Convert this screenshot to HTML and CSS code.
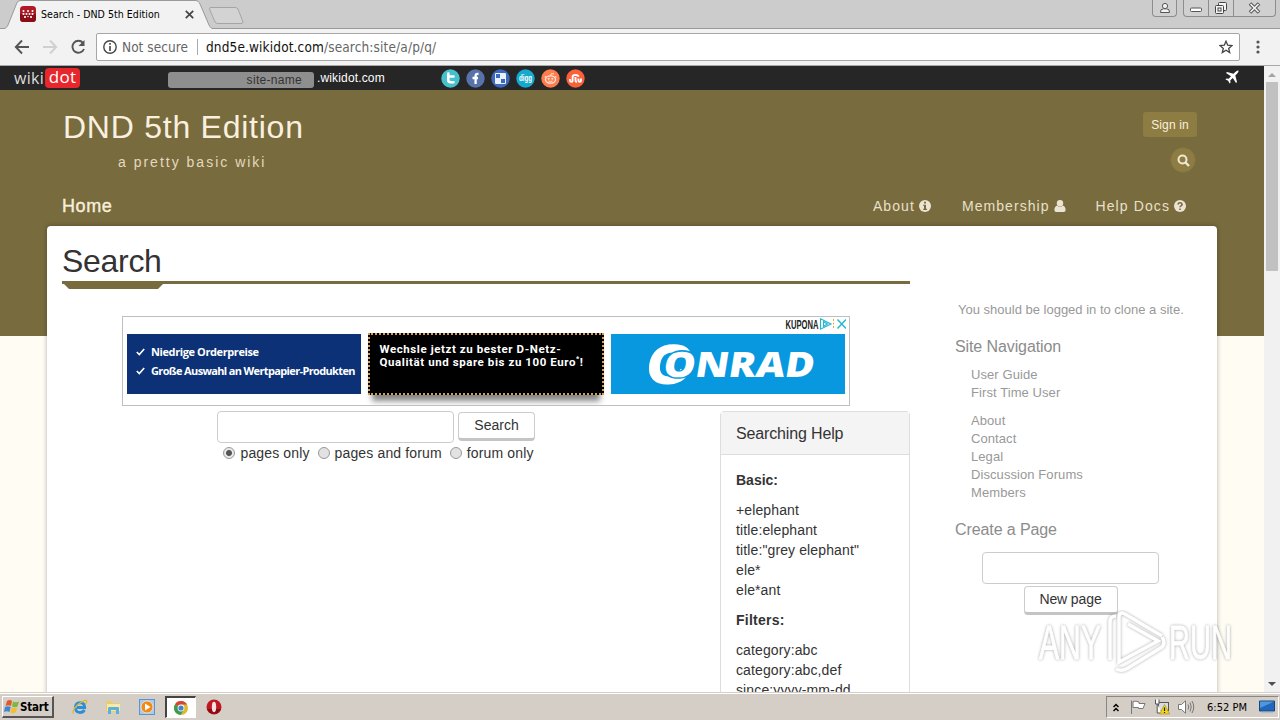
FILE: index.html
```
<!DOCTYPE html>
<html lang="en">
<head>
    <meta charset="UTF-8">
    <title>Search - DND 5th Edition</title>
    <link rel="stylesheet" href="styles.css">
</head>
<body>
<div class="tabs">
    <svg class="tab-shape" width="250" height="29" viewBox="0 0 250 29">
        <path d="M0 28.5H4C6 28.500 7 27 8 25L16 5C17 2 18 .5 21 .5H195C198 .5 199 2 200 4L209 25C210 27 211 28.500 213 28.500V30H0Z" fill="#f2f2f2"/>
        <path d="M0 28.500H4C6 28.500 7 27 8 25L16 5C17 2 18 .5 21 .5H195C198 .5 199 2 200 4L209 25C210 27 211 28.500 213 28.500H250" fill="none" stroke="#999"/>
        <path d="M211 7.500H235Q237 7.500 238 9L243 22Q243 23.500 241 23.500H218Q216 23.500 215 22L209.500 9Q209 7.500 211 7.500Z" fill="#d3d3d3" stroke="#a5a5a5"/>
    </svg>
    <div class="tab">
        <svg width="16" height="16" viewBox="0 0 16 16">
            <rect width="16" height="16" rx="3.500" fill="#b01a26"/>
            <path d="M0 8H16V12.500A3.500 3.500 0 0 1 12.500 16H3.500A3.500 3.500 0 0 1 0 12.500Z" fill="#8b0d18"/>
            <g fill="#fff"><circle cx="3.500" cy="5" r="1"/><circle cx="8" cy="5" r="1"/><circle cx="12.500" cy="5" r="1"/><circle cx="3.500" cy="8" r="1.100"/><circle cx="6.500" cy="8" r="1"/><circle cx="9.500" cy="8" r="1"/><circle cx="12.500" cy="8" r="1.100"/><circle cx="5" cy="11" r="1.100"/><circle cx="11" cy="11" r="1.100"/><circle cx="8" cy="10.500" r=".7"/></g>
        </svg>
        <span class="tab-title">Search - DND 5th Edition</span>
        <svg class="close" width="9" height="9" viewBox="0 0 9 9"><path d="M.8.8L8.200 8.200M8.200.8L.8 8.200" stroke="#444" stroke-width="1.700"/></svg>
    </div>
    <div class="window-buttons">
        <span class="user-btn"><svg width="12" height="12" viewBox="0 0 12 12" fill="#f4f4f4" stroke="#555"><path d="M1.500 10.500Q1 7 4.500 6.800H7.500Q11 7 10.500 10.500Z"/><circle cx="6" cy="4" r="2.600"/></svg></span>
        <span class="min-btn"><svg width="12" height="12" viewBox="0 0 12 12"><rect x=".5" y="6" width="11" height="3.500" rx="1" fill="#fff" stroke="#555"/></svg></span>
        <span class="max-btn"><svg width="14" height="14" viewBox="0 0 14 14" fill="#f4f4f4" stroke="#444"><rect x="4.500" y="1.500" width="8" height="8" rx="1"/><rect x="1.500" y="4.500" width="8" height="8" rx="1"/><rect x="4" y="7" width="3" height="3"/></svg></span>
        <span class="x-btn"><svg width="13" height="12" viewBox="0 0 13 12"><path d="M2 1.500L11 10.500M11 1.500L2 10.500" stroke="#555" stroke-width="3.600"/><path d="M2.500 2L10.500 10M10.500 2L2.500 10" stroke="#f4f4f4" stroke-width="1.700"/></svg></span>
    </div>
</div>

<div class="toolbar">
    <svg class="nav-icons" width="75" height="18" viewBox="0 0 75 18" fill="none" stroke-width="1.900">
        <path d="M15 9H2M8 2.500L1.800 9L8 15.500" stroke="#555"/>
        <path d="M29 9H42M36 2.500L42.200 9L36 15.500" stroke="#d0d0d0"/>
        <path d="M69 4.800A6 6 0 1 0 70 11" stroke="#555"/><path d="M70.500 2V8H64.500Z" fill="#555"/>
    </svg>
    <div class="address">
        <svg width="14" height="14" viewBox="0 0 14 14"><circle cx="7" cy="7" r="6.200" fill="none" stroke="#444" stroke-width="1.400"/><path d="M7 3V4.800M7 6V11" stroke="#444" stroke-width="1.600"/></svg>
        <span class="secure">Not secure</span>
        <span class="url"><b>dnd5e.wikidot.com</b>/search:site/a/p/q/</span>
        <svg class="star" width="14" height="14" viewBox="0 0 14 14"><path d="M7 1.200L8.700 5.200L13 5.600L9.700 8.400L10.700 12.600L7 10.300L3.300 12.600L4.300 8.400L1 5.600L5.300 5.200Z" fill="none" stroke="#444" stroke-width="1.300"/></svg>
    </div>
    <svg class="dots" width="4" height="14" viewBox="0 0 4 14" fill="#555"><circle cx="2" cy="2" r="1.600"/><circle cx="2" cy="7" r="1.600"/><circle cx="2" cy="12" r="1.600"/></svg>
</div>

<div class="viewport">
    <div class="page">
        <div class="wikibar">
            <span class="wiki">wiki</span><span class="dot">dot</span>
            <span class="site-name">site-name</span>
            <span class="domain">.wikidot.com</span>
            <div class="social">
                <svg width="19" height="19" viewBox="0 0 19 19"><circle cx="9.500" cy="9.500" r="9.200" fill="#47bfcd"/><path d="M7.300 4.500V11Q7.300 13.200 9.500 13.200H12.500M7.300 7.500H12.500" fill="none" stroke="#fff" stroke-width="2.600" stroke-linecap="round"/></svg>
                <svg width="19" height="19" viewBox="0 0 19 19"><circle cx="9.500" cy="9.500" r="9.200" fill="#5872aa"/><path d="M12.500 4.800H11.500Q9.600 4.800 9.600 7V15M6.500 9H12" fill="none" stroke="#fff" stroke-width="2.300"/></svg>
                <svg width="19" height="19" viewBox="0 0 19 19"><circle cx="9.500" cy="9.500" r="9.200" fill="#3b69bc"/><rect x="4" y="4" width="11" height="11" rx="1" fill="#e9f0fb"/><path d="M5 5H9V9H5ZM10 10H14V14H10Z" fill="#3b69bc"/></svg>
                <svg width="19" height="19" viewBox="0 0 19 19"><circle cx="9.500" cy="9.500" r="9.200" fill="#16a9cf"/><text class="digg" x="3" y="12" textLength="13" lengthAdjust="spacingAndGlyphs">digg</text></svg>
                <svg width="19" height="19" viewBox="0 0 19 19"><circle cx="9.500" cy="9.500" r="9.200" fill="#ff7d4d"/><ellipse cx="9.500" cy="10.500" rx="5" ry="3.700" fill="none" stroke="#ffe3d6" stroke-width="1.300"/><circle cx="7.700" cy="9.700" r="1" fill="#ffe3d6"/><circle cx="11.300" cy="9.700" r="1" fill="#ffe3d6"/><path d="M7.500 12Q9.500 13 11.500 12M9.500 7L10.500 4.500L13 5M4 8.500L4.500 7M15 8.500L14.500 7" fill="none" stroke="#ffe3d6"/></svg>
                <svg width="19" height="19" viewBox="0 0 19 19"><circle cx="9.500" cy="9.500" r="9.200" fill="#fb6039"/><path d="M4 10V11.500Q4 12.800 5.300 12.800T6.600 11.500V7.800Q6.600 6 9.500 6T12.400 7.800M9.500 8V11.200Q9.500 12.800 11 12.800M12.400 9.500V11.500Q12.400 12.800 13.700 12.800T15 11.500V9.500" fill="none" stroke="#fff" stroke-width="1.900"/></svg>
            </div>
            <svg class="plane" width="14" height="14" viewBox="0 0 14 14"><path d="M13.500.5Q12 0 10.300 2L8.500 3.700L2 2L1 3L6 6.200L3.700 8.700L1.500 8.500L.5 9.500L3.200 10.800L4.500 13.500L5.500 12.500L5.300 10.300L7.800 8L11 13L12 12L10.300 5.500L12 3.700Q14 2 13.500.5Z" fill="#fff"/></svg>
        </div>

        <header class="header">
            <div class="header-top">
                <div>
                    <div class="site-title">DND 5th Edition</div>
                    <div class="tagline">a pretty basic wiki</div>
                </div>
                <div class="account">
                    <a class="sign-in">Sign in</a>
                    <a class="search-btn"><svg width="13" height="13" viewBox="0 0 13 13" fill="none" stroke="#f0e8d6"><circle cx="5.500" cy="5.500" r="4" stroke-width="2"/><path d="M8.500 8.500L12 12" stroke-width="2.400"/></svg></a>
                </div>
            </div>
            <nav class="nav">
                <a class="home">Home</a>
                <a class="about">About <svg width="12" height="12" viewBox="0 0 12 12"><circle cx="6" cy="6" r="6" fill="#ece4d2"/><path d="M5 1.800H7V3.500H5ZM4.300 4.700H7V8.700H8V10H4.200V8.700H5V6H4.300Z" fill="#786b3e"/></svg></a>
                <a class="membership">Membership <svg width="12" height="12" viewBox="0 0 12 12" fill="#ece4d2"><circle cx="6" cy="3.200" r="3.200"/><path d="M3 5.500Q6 8 9 5.500Q11.600 6.500 11.600 10Q11.600 12 9.800 12H2.200Q.4 12 .4 10Q.4 6.500 3 5.500Z"/></svg></a>
                <a class="docs">Help Docs <svg width="12" height="12" viewBox="0 0 12 12"><circle cx="6" cy="6" r="6" fill="#ece4d2"/><path d="M3.900 4.500Q4.200 2.700 6 2.700T8.100 4.500Q8.100 5.300 7 5.900Q6 6.400 6 7.300M6 8.400V10" fill="none" stroke="#786b3e" stroke-width="1.600"/></svg></a>
            </nav>
        </header>

        <div class="card">
            <main class="main">
                <h1>Search</h1>
                <svg class="title-tab" width="101" height="6" viewBox="0 0 101 6"><path d="M2 0H101L96 5H7Z" fill="#786b3e"/></svg>

                <div class="ad">
                    <div class="ad-head">
                        <svg width="62" height="14" viewBox="0 0 62 14">
                            <text class="kupona" x="1.500" y="11.500" textLength="33" lengthAdjust="spacingAndGlyphs">KUPONA</text>
                            <path d="M36.500 1.800L47 7L36.500 12.200ZM39.500 4.800V9.200L43.500 7Z" fill="none" stroke="#1fb6cf" stroke-width="1.100"/>
                            <path d="M49.500 2V12" stroke="#f0a13a" stroke-dasharray="2 1.500"/>
                            <path d="M53.500 2.500L62 11.500M62 2.500L53.500 11.500" stroke="#1fb6cf" stroke-width="1.400"/>
                        </svg>
                    </div>
                    <div class="banners">
                        <div class="banner blue">
                            <p><svg width="9" height="8" viewBox="0 0 9 8"><path d="M.8 4L3.300 6.500L8.200 1" fill="none" stroke="#fff" stroke-width="1.600"/></svg><span>Niedrige Orderpreise</span></p>
                            <p><svg width="9" height="8" viewBox="0 0 9 8"><path d="M.8 4L3.300 6.500L8.200 1" fill="none" stroke="#fff" stroke-width="1.600"/></svg><span class="long">Große Auswahl an Wertpapier-Produkten</span></p>
                        </div>
                        <div class="banner black">Wechsle jetzt zu bester D-Netz-<br>Qualität und spare bis zu 100 Euro<sup>*</sup>!</div>
                        <div class="banner conrad">
                            <svg width="234" height="60" viewBox="0 0 234 60">
                                <text class="conrad-c" transform="translate(34 49) skewX(-9)" textLength="43" lengthAdjust="spacingAndGlyphs">C</text>
                                <text class="conrad-rest" transform="translate(51 43) skewX(-9)" textLength="151" lengthAdjust="spacingAndGlyphs">ONRAD</text>
                            </svg>
                        </div>
                    </div>
                </div>

                <div class="content">
                    <form class="search-form">
                        <div class="search-row">
                            <input type="text" class="field">
                            <button type="button" class="btn">Search</button>
                        </div>
                        <div class="options">
                            <label><i class="radio on"></i>pages only</label>
                            <label><i class="radio"></i>pages and forum</label>
                            <label><i class="radio"></i>forum only</label>
                        </div>
                    </form>
                    <div class="panel">
                        <div class="panel-heading">Searching Help</div>
                        <div class="panel-body">
                            <p><strong>Basic:</strong></p>
                            <p>+elephant<br>title:elephant<br>title:"grey elephant"<br>ele*<br>ele*ant</p>
                            <p><strong class="filters">Filters:</strong></p>
                            <p>category:abc<br>category:abc,def<br>since:yyyy-mm-dd</p>
                        </div>
                    </div>
                </div>
            </main>

            <aside class="side">
                <p class="clone">You should be logged in to clone a site.</p>
                <h2>Site Navigation</h2>
                <ul>
                    <li>User Guide</li>
                    <li>First Time User</li>
                </ul>
                <ul>
                    <li>About</li>
                    <li>Contact</li>
                    <li>Legal</li>
                    <li>Discussion Forums</li>
                    <li>Members</li>
                </ul>
                <h2 class="create">Create a Page</h2>
                <div class="new-page">
                    <input type="text" class="field">
                    <button type="button" class="btn">New page</button>
                </div>
            </aside>
        </div>
    </div>
    <div class="scrollbar">
        <i class="up"></i>
        <i class="thumb"></i>
        <i class="down"></i>
    </div>
    <svg class="watermark" width="204" height="72" viewBox="0 0 204 72">
        <g class="mark">
            <text x="5" y="49" textLength="62" lengthAdjust="spacingAndGlyphs">ANY</text>
            <text x="135" y="49" textLength="63" lengthAdjust="spacingAndGlyphs">RUN</text>
            <path d="M76 50V12Q76 6 82 6M85 44V8Q85 1 91 4L128 26M85 44V52L124 31L94 14M82 59Q88 62 94 58L128 37Q132 33 128 27"/>
        </g>
    </svg>
</div>

<div class="taskbar">
    <div class="start">
        <svg width="16" height="15" viewBox="0 0 16 15"><path d="M3 2Q6 0 8 2L7 7Q4 5.500 1.500 7Z" fill="#e2582c"/><path d="M9 2.500Q12 4 15 2.500L13.500 7.500Q11 9 8 7.500Z" fill="#7db83a"/><path d="M1 8Q4 6.500 6.700 8L5.500 13Q3 11.500 0 13Z" fill="#3f86d2"/><path d="M7.700 8.500Q10.500 10 13.200 8.500L12 13Q9.500 15 6.500 13.500Z" fill="#f3bd2c"/></svg>
        <span>Start</span>
    </div>
    <div class="launch">
        <span><svg width="16" height="16" viewBox="0 0 16 16"><path d="M12.500 11Q11 13.500 8 13.500Q3.500 13.300 3.300 8.500Q3.500 4 8 3.600Q12.700 4 12.700 8.500H5" fill="none" stroke="#2c8fd6" stroke-width="2.800"/><path d="M1.500 14.500Q-.5 12 5.500 6Q12 .5 14.500 1.500Q15.500 2.500 13.500 5" fill="none" stroke="#e0b832" stroke-width="1.300"/></svg></span>
        <span><svg width="16" height="16" viewBox="0 0 16 16"><path d="M1 2H6L7 4H14V13H1Z" fill="#e8cd6a"/><path d="M2 5H15V12H2Z" fill="#f8e9a4"/><path d="M3 9Q3 8 4 8H13Q14 8 14 9V15H11V11H6V15H3Z" fill="#5cb0e0"/></svg></span>
        <span><svg width="16" height="16" viewBox="0 0 16 16"><rect x=".5" y=".5" width="15" height="15" fill="#a7cbed" stroke="#5b95cf"/><circle cx="8" cy="8" r="6" fill="#f58714" stroke="#fff" stroke-width=".6"/><path d="M6 4.500L11.500 8L6 11.500Z" fill="#fff"/></svg></span>
        <span class="active"><svg width="14" height="14" viewBox="0 0 14 14"><circle cx="7" cy="7" r="7" fill="#ddb92d"/><path d="M7 7L1 3.400A7 7 0 0 1 13.100 3.500H7Z" fill="#d64436"/><path d="M1 3.400A7 7 0 0 0 6.500 14L10 8.700L7 7Z" fill="#3a9b51"/><circle cx="7" cy="7" r="3.400" fill="#fff"/><circle cx="7" cy="7" r="2.600" fill="#4780d0"/></svg></span>
        <span><svg width="16" height="16" viewBox="0 0 16 16"><circle cx="8" cy="8" r="7.500" fill="#c01822"/><path d="M1 10A7.500 7.500 0 0 0 15 10Z" fill="#8c0b12"/><ellipse cx="8" cy="8" rx="2.200" ry="5.200" fill="#f6e2e2"/></svg></span>
    </div>
    <div class="tray">
        <svg width="6" height="9" viewBox="0 0 6 9" fill="none" stroke="#000" stroke-width="1.500"><path d="M.5 4L3 1.500L5.500 4M.5 8L3 5.500L5.500 8"/></svg>
        <svg class="flag" width="16" height="16" viewBox="0 0 16 16" fill="#fff" stroke="#777"><path d="M1.500 1.500V15M3 2.500Q6 1.500 9 3V4.500H15L13 9.500H8.500V8.500H3Z"/></svg>
        <svg class="net" width="16" height="16" viewBox="0 0 16 16"><rect x="4.500" y="3.500" width="10" height="8" fill="#d5dce3" stroke="#555"/><path d="M1.500.5V5H5V.5M3.200 5V14H8" fill="#fff" stroke="#555"/><path d="M10.500 5.500L15.700 15H5.500Z" fill="#f5d21c" stroke="#a48a14" stroke-width=".6"/><path d="M10.500 8.500V12M10.500 13V14" stroke="#222" stroke-width="1.200"/></svg>
        <svg class="speaker" width="17" height="14" viewBox="0 0 17 14" fill="none" stroke="#777"><path d="M.5 4.500H3.500L7.500.8V13.200L3.500 9.500H.5Z" fill="#fff"/><path d="M10 4.500Q11.500 7 10 9.500M12 2.500Q14.500 7 12 11.500M14 1Q17.500 7 14 13"/></svg>
        <span class="clock">6:52 PM</span>
        <svg width="16" height="14" viewBox="0 0 16 14"><path d="M.5 1H15.500V11H.5Z" fill="#2168bd" stroke="#174580"/><path d="M1 1.500H15L1 8Z" fill="#4f98de"/><path d="M2 12.500H14" stroke="#b6bcc4" stroke-width="1.500"/></svg>
    </div>
</div>
</body>
</html>
```
FILE: styles.css
```
*{
    margin:0;
    padding:0;
    box-sizing:border-box;
}
body{
    width:1280px;
    height:720px;
    display:flex;
    flex-direction:column;
    overflow:hidden;
    font-family:"Liberation Sans", Arial, sans-serif;
    font-size:14px;
    color:#333;
}
svg{
    display:block;
    flex:none;
}

/* browser window */
.tabs{
    height:29px;
    background:#ccc;
    border-bottom:1px solid #999;
    display:flex;
    justify-content:space-between;
    position:relative;
}
.tab-shape{
    position:absolute;
    left:0;
    top:0;
}
.tab{
    display:flex;
    align-items:center;
    width:194px;
    padding-left:20px;
    position:relative;
    font-family:"DejaVu Sans Condensed", "DejaVu Sans", sans-serif;
    color:#000;
}
.tab-title{
    margin:-1px 0 0 5px;
    white-space:nowrap;
    font-size:10.5px;
    letter-spacing:.04px;
}
.close{
    margin:1px 0 0 auto;
}
.window-buttons{
    display:flex;
    height:17px;
    margin-right:4px;
}
.window-buttons span{
    display:flex;
    align-items:center;
    justify-content:center;
    border:1px solid #8d8d8d;
    border-top:0;
    background:#d0d0d0;
}
.window-buttons .user-btn{
    width:25px;
    margin-right:6px;
    border-radius:0 0 4px 4px;
}
.window-buttons .min-btn{
    width:26px;
    border-radius:0 0 0 4px;
}
.window-buttons .max-btn{
    width:25px;
    border-left:0;
}
.window-buttons .x-btn{
    width:42px;
    border-left:0;
    border-radius:0 0 4px 0;
}
.toolbar{
    height:37px;
    background:#f2f2f2;
    border-bottom:1px solid #a9a9a9;
    display:flex;
    align-items:center;
    padding:0 20px 0 14px;
}
.address{
    flex:1;
    height:28px;
    margin-left:7px;
    padding:0 6px 0 6px;
    border:1px solid #a6a6a6;
    border-radius:2px;
    background:#fff;
    display:flex;
    align-items:center;
    font:13.5px "DejaVu Sans Condensed", "DejaVu Sans", sans-serif;
    white-space:nowrap;
}
.secure{
    color:#666;
    margin-left:5px;
    padding-right:9px;
    border-right:1px solid #aaa;
    letter-spacing:.05px;
}
.url{
    margin-left:8px;
    color:#666;
    letter-spacing:.14px;
}
.url b{
    font-weight:normal;
    color:#111;
}
.star{
    margin-left:auto;
}
.dots{
    margin-left:16px;
}

/* page */
.viewport{
    height:626px;
    display:flex;
    position:relative;
    overflow:hidden;
}
.page{
    width:1264px;
    background:linear-gradient(#786b3e 270px, #fffcf3 270px);
}
.wikibar{
    height:24px;
    background:#262626;
    display:flex;
    align-items:center;
    padding:0 25px 0 14px;
    color:#fff;
}
.wiki, .dot{
    font:16px/20px "Open Sans", sans-serif;
    letter-spacing:.3px;
}
.wiki{
    width:31px;
    color:#ddd;
}
.dot{
    width:35px;
    height:20px;
    line-height:18px;
    text-align:center;
    background:#e8272d;
    border-radius:4px;
    font-size:17px;
}
.site-name{
    width:146px;
    height:16px;
    margin:4px 0 0 88px;
    padding-right:12px;
    border-radius:3px;
    background:#8e8e8e;
    color:#333;
    text-align:right;
    font-size:12px;
    line-height:16px;
    letter-spacing:.3px;
}
.domain{
    width:125px;
    padding-left:3px;
    font-size:12px;
    letter-spacing:.15px;
}
.social{
    display:flex;
    gap:6px;
    margin-left:2px;
}
.digg{
    font:bold 8.5px "Liberation Sans", sans-serif;
    fill:#fff;
}
.plane{
    margin:-3px 0 0 auto;
}
.header{
    height:136px;
    margin:0 47px;
    padding:0 15px;
    color:#f3ead6;
}
.header-top{
    height:97px;
    display:flex;
    justify-content:space-between;
}
.site-title{
    padding:18px 0 0 1px;
    font-size:32px;
    line-height:38px;
    letter-spacing:.75px;
    color:#faf0df;
}
.tagline{
    margin-left:56px;
    line-height:32px;
    letter-spacing:2px;
    color:#e3d9bd;
}
.account{
    width:54px;
    margin-right:5px;
    padding-top:22px;
    display:flex;
    flex-direction:column;
    align-items:flex-end;
    gap:10px;
}
.sign-in{
    width:54px;
    height:25px;
    border-radius:3px;
    background:#8d7d42;
    color:#faf0df;
    font-size:12px;
    line-height:26px;
    text-align:center;
    letter-spacing:.15px;
}
.search-btn{
    width:26px;
    height:26px;
    margin-right:1px;
    border:1px solid #7f713f;
    border-radius:50%;
    background:#8d7d42;
    display:flex;
    align-items:center;
    justify-content:center;
}
.nav{
    display:flex;
    line-height:38px;
    letter-spacing:1.1px;
    color:#e9e0c8;
}
.nav a{
    display:flex;
    align-items:center;
    gap:4px;
}
.nav .home{
    font-size:18px;
    letter-spacing:.6px;
    color:#f7eedb;
    -webkit-text-stroke:.4px #f7eedb;
    margin-right:auto;
}
.about{
    margin-right:31px;
}
.membership{
    margin-right:30px;
    letter-spacing:1.05px;
}
.docs{
    margin-right:16px;
}
.card{
    height:500px;
    margin:0 47px;
    padding:0 15px;
    background:#fff;
    border-radius:4px 4px 0 0;
    box-shadow:0 0 5px rgba(0,0,0,.3);
    display:flex;
}
.main{
    width:848px;
}
h1{
    height:58px;
    border-bottom:3px solid #786b3e;
    font-size:32px;
    font-weight:normal;
    line-height:70px;
    letter-spacing:-.3px;
}

/* ad block */
.ad{
    width:728px;
    height:90px;
    margin:26px 60px 5px;
    border:1px solid #bfbfbf;
    padding:0 4px;
    overflow:hidden;
}
.ad-head{
    height:16px;
    margin-right:-1px;
    display:flex;
    justify-content:flex-end;
}
.kupona{
    font:bold 12.5px "Liberation Sans", sans-serif;
    fill:#222;
}
.banners{
    display:flex;
    gap:7px;
}
.banner{
    width:234px;
    height:60px;
    margin-top:1px;
    color:#fff;
    white-space:nowrap;
}
.blue{
    background:#0c3176;
    padding:8px 0 0 9px;
    font:bold 11px/19px "Open Sans", sans-serif;
    letter-spacing:-.4px;
}
.blue p{
    display:flex;
    align-items:center;
    gap:6px;
}
.long{
    letter-spacing:-.64px;
}
.black{
    width:237px;
    height:62px;
    margin-top:0;
    padding:8px 0 0 10px;
    background:#000;
    border:2px dotted #d2a04d;
    box-shadow:0 10px 6px -4px #858585;
    font:bold 11.5px/13px Roboto, sans-serif;
    letter-spacing:.58px;
}
.black sup{
    font-size:7px;
    line-height:0;
}
.conrad{
    background:#0798df;
}
.conrad-c{
    font:bold 54px "Liberation Sans", sans-serif;
    fill:#fff;
    stroke:#fff;
    stroke-width:2px;
}
.conrad-rest{
    font:800 35px "Open Sans", sans-serif;
    fill:#fff;
    stroke:#0798df;
    stroke-width:3px;
    paint-order:stroke;
}

/* search form */
.content{
    display:flex;
    justify-content:space-between;
}
.search-form{
    width:628px;
}
.search-row{
    display:flex;
    justify-content:center;
    gap:4px;
}
.field{
    width:237px;
    height:32px;
    border:1px solid #ccc;
    border-radius:4px;
    background:#fff;
}
.btn{
    height:29px;
    width:77px;
    margin-top:1px;
    padding-bottom:1px;
    border:1px solid #ccc;
    border-bottom:3px solid #c4c4c4;
    border-radius:4px;
    background:#fff;
    color:#333;
    font:14px "Liberation Sans", sans-serif;
}
.options{
    display:flex;
    justify-content:center;
    gap:8px;
    padding-left:5px;
    line-height:21px;
    letter-spacing:.14px;
}
.options label{
    display:flex;
    align-items:center;
}
.radio{
    width:12px;
    height:12px;
    margin:-2px 5px 0 0;
    border:1px solid #999;
    border-radius:50%;
    background:#e2e2e2;
}
.radio.on{
    background:radial-gradient(#555 2.5px, #e8e8e8 3.5px);
}
.panel{
    width:190px;
    height:300px;
    border:1px solid #ddd;
    border-radius:4px;
    background:#fff;
}
.panel-heading{
    height:43px;
    padding-left:15px;
    background:#f4f4f4;
    border-bottom:1px solid #ddd;
    font-size:16px;
    line-height:44px;
    letter-spacing:-.15px;
}
.panel-body{
    padding:15px;
    line-height:20px;
    letter-spacing:.12px;
    white-space:nowrap;
}
.panel-body p{
    margin-bottom:10px;
}
.panel-body strong{
    letter-spacing:0;
}
.panel-body .filters{
    letter-spacing:.25px;
}

/* sidebar */
.side{
    width:247px;
    margin-left:45px;
    padding-top:74px;
    font-size:13px;
    line-height:18px;
    color:#999;
}
.clone{
    padding-left:3px;
    line-height:20px;
}
h2{
    margin:17px 0 9px;
    font-size:16px;
    font-weight:normal;
    line-height:20px;
    letter-spacing:-.1px;
    color:#8c8c8c;
}
.side ul{
    list-style:none;
    margin-bottom:10px;
    padding-left:16px;
    letter-spacing:.08px;
}
.side .create{
    margin:18px 0 12px;
}
.new-page{
    width:177px;
    margin-left:27px;
    display:flex;
    flex-direction:column;
    align-items:center;
}
.new-page .field{
    width:177px;
}
.new-page .btn{
    width:94px;
    margin-top:2px;
    letter-spacing:-.1px;
}
.scrollbar{
    width:16px;
    background:#f1f1f1;
    display:flex;
    flex-direction:column;
    align-items:center;
    padding:7px 0 6px;
}
.up{
    border:4px solid transparent;
    border-top:0;
    border-bottom-color:#a3a3a3;
}
.thumb{
    width:12px;
    height:189px;
    margin-top:5px;
    background:#c1c1c1;
}
.down{
    margin-top:auto;
    border:4px solid transparent;
    border-bottom:0;
    border-top-color:#505050;
}

/* overlay logo */
.watermark{
    position:absolute;
    left:1034px;
    top:544px;
}
.mark{
    font:48px "Liberation Sans", sans-serif;
    fill:#fff;
    stroke:#fff;
    stroke-width:.8px;
    opacity:.85;
    filter:drop-shadow(0 0 1.5px rgba(0,0,0,.4));
}
.mark path{
    fill:none;
    stroke-width:3.5px;
}

/* taskbar */
.taskbar{
    height:28px;
    padding:2px 0 1px 2px;
    background:#d4cec6;
    border-top:1px solid #d4cec6;
    box-shadow:inset 0 1px #fff;
    display:flex;
    align-items:center;
}
.start{
    width:52px;
    height:22px;
    border:1px solid #fff;
    border-right:2px solid #555;
    border-bottom:2px solid #555;
    display:flex;
    align-items:center;
    font:bold 11.5px "DejaVu Sans Condensed", "DejaVu Sans", sans-serif;
    letter-spacing:-.2px;
    color:#000;
    padding-left:1px;
}
.launch{
    display:flex;
    margin-left:10px;
}
.launch span{
    width:31px;
    height:22px;
    margin-right:2.5px;
    display:flex;
    align-items:center;
    justify-content:center;
}
.launch .active{
    background:#fff;
    border:1px solid #fff;
    border-top:2px solid #444;
    border-left:2px solid #444;
}
.tray{
    width:173px;
    height:22px;
    margin:0 1px 0 auto;
    padding:0 3px 0 6px;
    border:1px solid #fff;
    border-top-color:#888;
    border-left-color:#888;
    display:flex;
    align-items:center;
}
.flag{
    margin-left:11px;
}
.net{
    margin-left:8px;
}
.speaker{
    margin-left:8px;
}
.clock{
    margin:0 auto;
    font:11px "DejaVu Sans Condensed", "DejaVu Sans", sans-serif;
    letter-spacing:0;
    color:#000;
}
```
